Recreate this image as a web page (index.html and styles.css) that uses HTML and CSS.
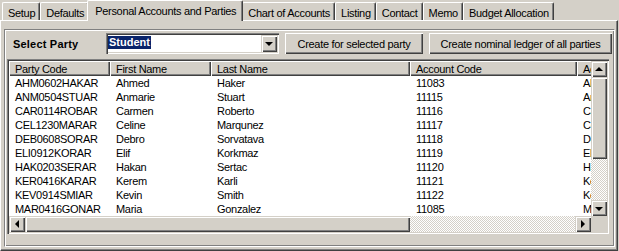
FILE: index.html
```html
<!doctype html>
<html lang="en">
<head>
	<meta charset="utf-8">
	<title>Personal Accounts and Parties</title>
<link rel="stylesheet" href="styles.css">
</head>
<body>
<div class="window">
	<div class="tabs">
		<div class="tab">Setup</div>
		<div class="tab">Defaults</div>
		<div class="tab active">Personal Accounts and Parties</div>
		<div class="tab">Chart of Accounts</div>
		<div class="tab">Listing</div>
		<div class="tab">Contact</div>
		<div class="tab">Memo</div>
		<div class="tab">Budget Allocation</div>
	</div>
	<div class="page">
		<div class="panel">
			<div class="toolbar">
				<span class="label">Select Party</span>
				<div class="combo">
					<span class="combo-text"><span class="sel">Student</span></span>
					<span class="combo-btn raised"><i class="arrow down"></i></span>
				</div>
				<button class="btn btn-first">Create for selected party</button>
				<button class="btn btn-all">Create nominal ledger of all parties</button>
			</div>
			<div class="grid">
				<div class="list">
					<table>
						<colgroup><col class="c1"><col class="c2"><col class="c3"><col class="c4"><col class="c5"></colgroup>
						<thead>
						<tr><th>Party Code</th><th>First Name</th><th>Last Name</th><th>Account Code</th><th>Account Name</th></tr>
						</thead>
						<tbody>
						<tr><td>AHM0602HAKAR</td><td>Ahmed</td><td>Haker</td><td>11083</td><td>Ahmed Haker</td></tr>
						<tr><td>ANM0504STUAR</td><td>Anmarie</td><td>Stuart</td><td>11115</td><td>Anmarie Stuart</td></tr>
						<tr><td>CAR0114ROBAR</td><td>Carmen</td><td>Roberto</td><td>11116</td><td>Carmen Roberto</td></tr>
						<tr><td>CEL1230MARAR</td><td>Celine</td><td>Marqunez</td><td>11117</td><td>Celine Marqunez</td></tr>
						<tr><td>DEB0608SORAR</td><td>Debro</td><td>Sorvatava</td><td>11118</td><td>Debro Sorvatava</td></tr>
						<tr><td>ELI0912KORAR</td><td>Elif</td><td>Korkmaz</td><td>11119</td><td>Elif Korkmaz</td></tr>
						<tr><td>HAK0203SERAR</td><td>Hakan</td><td>Sertac</td><td>11120</td><td>Hakan Sertac</td></tr>
						<tr><td>KER0416KARAR</td><td>Kerem</td><td>Karli</td><td>11121</td><td>Kerem Karli</td></tr>
						<tr><td>KEV0914SMIAR</td><td>Kevin</td><td>Smith</td><td>11122</td><td>Kevin Smith</td></tr>
						<tr><td>MAR0416GONAR</td><td>Maria</td><td>Gonzalez</td><td>11085</td><td>Maria Gonzalez</td></tr>
						</tbody>
					</table>
				</div>
				<div class="vscroll">
					<span class="sb-btn raised"><i class="arrow up"></i></span>
					<span class="v-thumb raised"></span>
					<span class="track"></span>
					<span class="sb-btn raised"><i class="arrow down"></i></span>
				</div>
				<div class="hscroll">
					<span class="sb-btn raised"><i class="arrow left"></i></span>
					<span class="h-thumb raised"></span>
					<span class="track"></span>
					<span class="sb-btn raised"><i class="arrow right"></i></span>
				</div>
				<div class="corner"></div>
			</div>
		</div>
	</div>
</div>
</body>
</html>
```

FILE: styles.css
```css
body {
	margin: 0;
	background: #d4d0c8;
	color: #000;
	font-family: "Liberation Sans", Arial, sans-serif;
	font-size: 11px;
	letter-spacing: -0.3px;
}

.window {
	width: 619px;
	height: 251px;
	overflow: hidden;
}

/* tab strip */
.tabs {
	display: flex;
	align-items: flex-end;
	height: 20px;
	padding-left: 2px;
	position: relative;
	z-index: 1;
}

.tab {
	height: 18px;
	line-height: 20px;
	padding: 0 4px 0 5px;
	border-top: 1px solid #fff;
	border-left: 1px solid #fff;
	border-right: 1px solid #404040;
	border-radius: 2px 2px 0 0;
	box-shadow: inset -1px 0 #808080;
	box-sizing: border-box;
	white-space: nowrap;
}

.tab.active {
	height: 21px;
	line-height: 20px;
	margin: 0 -1px -1px -2px;
	padding: 0 6px 0 7px;
	background: #d4d0c8;
	position: relative;
}

/* tab page */
.page {
	width: 618px;
	height: 231px;
	box-sizing: border-box;
	border-top: 1px solid #fff;
	border-left: 1px solid #fff;
	border-right: 1px solid #404040;
	border-bottom: 1px solid #404040;
	box-shadow: inset -1px -1px #808080;
	padding: 8px 2px 0 3px;
}

.panel {
	height: 218px;
	box-sizing: border-box;
	border: 1px solid;
	border-color: #808080 #fff #fff #808080;
	box-shadow: inset 1px 1px #fff, inset -1px -1px #808080;
	padding: 3px 2px 0 2px;
}

/* top row */
.toolbar {
	display: flex;
	align-items: center;
	height: 21px;
	padding-left: 6px;
}

.label {
	width: 93px;
	font-weight: bold;
	letter-spacing: 0.2px;
}

.combo {
	display: flex;
	width: 173px;
	height: 21px;
	box-sizing: border-box;
	padding: 2px;
	background: #fff;
	box-shadow: inset 1px 1px #808080, inset 2px 2px #404040, inset -1px -1px #fff, inset -2px -2px #d4d0c8;
}

.combo-text {
	flex: 1;
	padding: 1px 0 0 0;
}

.sel {
	display: inline-block;
	background: #0a246a;
	color: #fff;
	font-weight: bold;
	letter-spacing: 0;
	line-height: 13px;
	padding: 0 1px;
}

.combo-btn {
	width: 16px;
	height: 17px;
}

.raised {
	display: flex;
	align-items: center;
	justify-content: center;
	box-sizing: border-box;
	background: #d4d0c8;
	box-shadow: inset 1px 1px #d4d0c8, inset 2px 2px #fff, inset -1px -1px #404040, inset -2px -2px #808080;
}

.btn {
	height: 21px;
	margin-left: 6px;
	padding: 0;
	border: 0;
	background: #d4d0c8;
	font-family: inherit;
	font-size: 11px;
	letter-spacing: inherit;
	color: #000;
	box-shadow: inset 1px 1px #fff, inset -1px -1px #404040, inset -2px -2px #808080;
}

.btn-first {
	width: 138px;
}

.btn-all {
	flex: 1;
}

/* arrows */
.arrow {
	width: 0;
	height: 0;
	border: 4px solid transparent;
}

.arrow.down {
	border-top-color: #000;
	border-bottom-width: 0;
	margin-top: 1px;
}

.arrow.up {
	border-bottom-color: #000;
	border-top-width: 0;
}

.arrow.left {
	border-right-color: #000;
	border-left-width: 0;
}

.arrow.right {
	border-left-color: #000;
	border-right-width: 0;
}

/* list */
.grid {
	display: grid;
	grid-template-columns: 582px 16px;
	grid-template-rows: 155px 16px;
	width: 602px;
	margin-top: 5px;
	padding: 2px;
	box-sizing: border-box;
	background: #fff;
	box-shadow: inset 1px 1px #808080, inset 2px 2px #404040, inset -1px -1px #fff, inset -2px -2px #d4d0c8;
}

.list {
	overflow: hidden;
	background: #fff;
}

table {
	border-collapse: collapse;
	table-layout: fixed;
	width: 668px;
}

col.c1, col.c2 {
	width: 101px;
}

col.c3 {
	width: 199px;
}

col.c4 {
	width: 167px;
}

col.c5 {
	width: 100px;
}

th {
	height: 15px;
	padding: 0 0 0 6px;
	box-sizing: border-box;
	text-align: left;
	font-weight: normal;
	background: #d4d0c8;
	white-space: nowrap;
	overflow: hidden;
	box-shadow: inset 1px 1px #fff, inset -1px -1px #404040, inset -2px -2px #808080;
}

td {
	height: 14px;
	line-height: 14px;
	padding: 0 0 0 6px;
	white-space: nowrap;
	overflow: hidden;
}

/* scroll bars */
.vscroll {
	display: flex;
	flex-direction: column;
}

.hscroll {
	display: flex;
}

.sb-btn {
	width: 16px;
	height: 16px;
}

.v-thumb {
	height: 82px;
}

.h-thumb {
	width: 385px;
}

.track {
	flex: 1;
	background: repeating-conic-gradient(#fff 0 25%, #d4d0c8 0 50%) 0 0 / 2px 2px;
}

.corner {
	background: #d4d0c8;
}
```
